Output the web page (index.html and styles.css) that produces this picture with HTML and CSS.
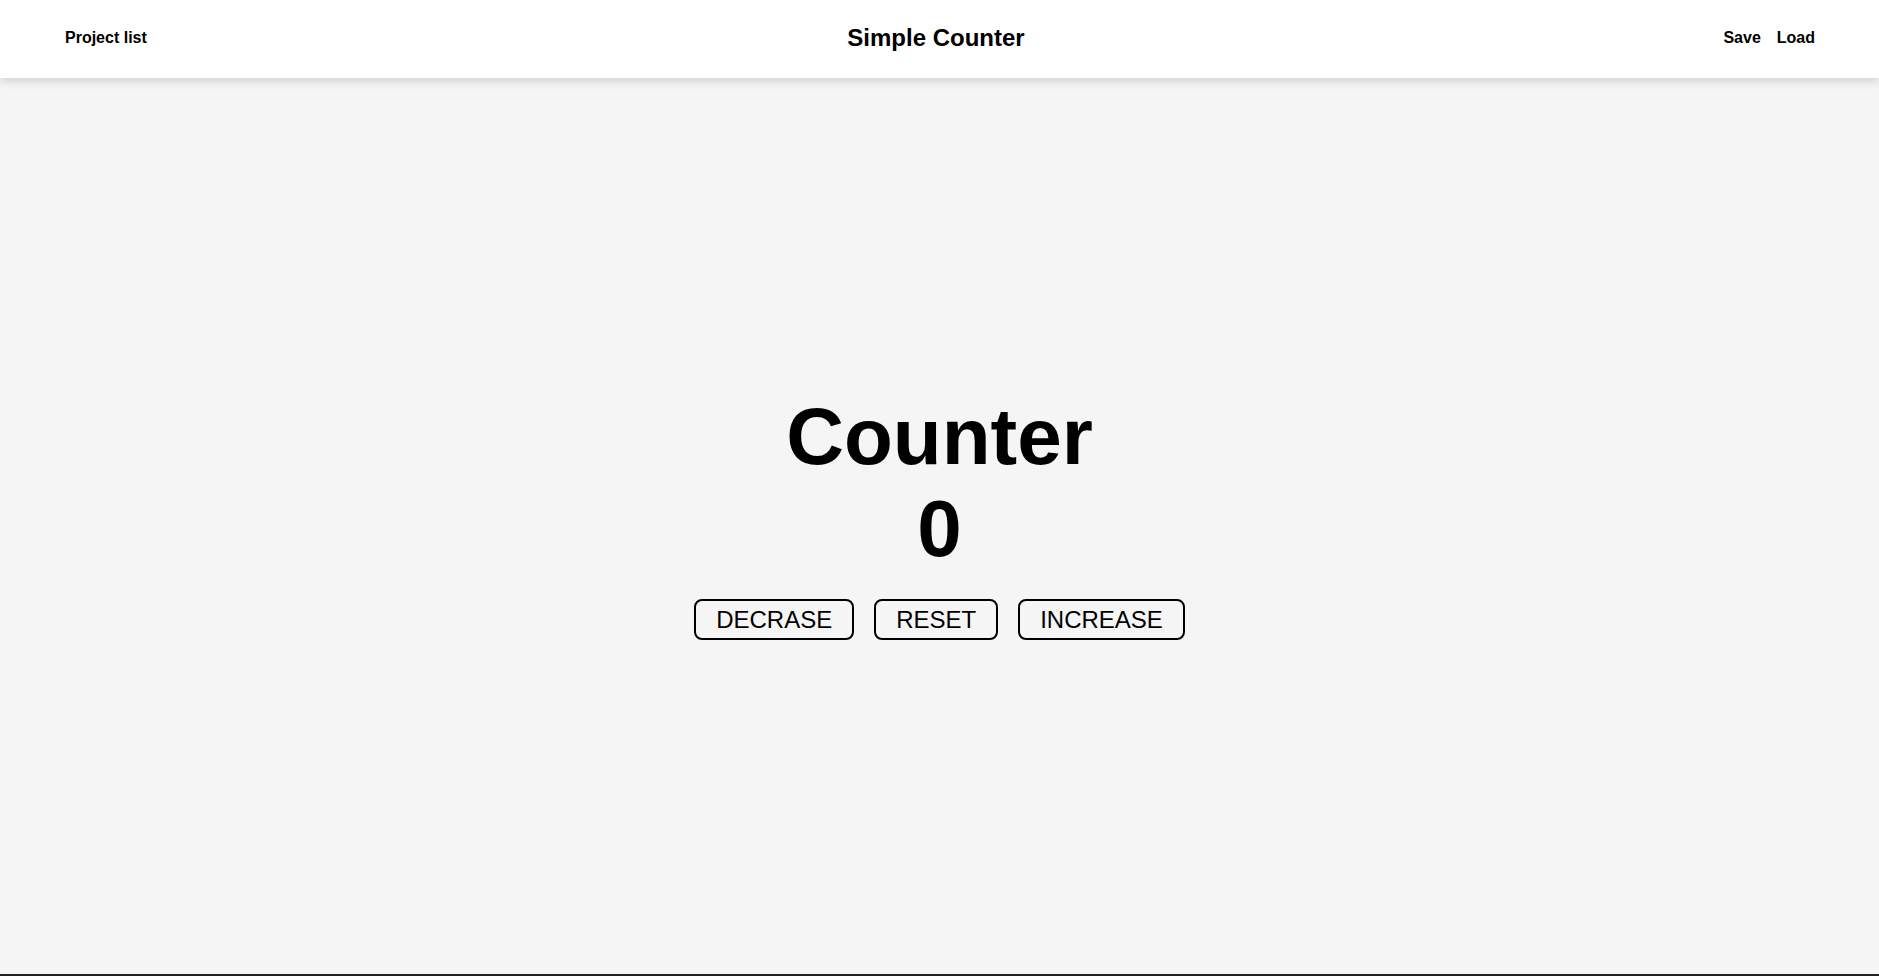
FILE: index.html
```html
<!DOCTYPE html>
<html lang="en">
<head>
<meta charset="utf-8">
<title>Simple Counter</title>
<link rel="stylesheet" href="styles.css">
</head>
<body>
<div class="app">
  <header class="topbar">
    <a class="nav-link" href="#">Project list</a>
    <h1 class="title">Simple Counter</h1>
    <nav class="actions">
      <a class="nav-link" href="#">Save</a>
      <a class="nav-link" href="#">Load</a>
    </nav>
  </header>
  <main class="content">
    <section class="counter">
      <h2 class="counter-title">Counter</h2>
      <div class="counter-value">0</div>
      <div class="buttons">
        <button class="btn">DECRASE</button>
        <button class="btn">RESET</button>
        <button class="btn">INCREASE</button>
      </div>
    </section>
  </main>
  <div class="bottom-line"></div>
</div>
</body>
</html>
```

FILE: styles.css
```css
* { box-sizing: border-box; }
html, body {
  margin: 0;
  padding: 0;
  height: 100%;
}
body {
  font-family: "Liberation Sans", Arial, sans-serif;
  background: #f5f5f5;
  color: #000;
}
.app {
  display: flex;
  flex-direction: column;
  height: 100vh;
}
.topbar {
  position: relative;
  z-index: 1;
  height: 78px;
  flex: 0 0 78px;
  background: #fff;
  box-shadow: 0 2px 10px rgba(0, 0, 0, 0.18);
  display: grid;
  grid-template-columns: 1fr auto 1fr;
  align-items: center;
  padding: 0 64px 2px 65px;
}
.nav-link {
  font-size: 16px;
  font-weight: bold;
  color: #000;
  text-decoration: none;
}
.title {
  margin: 0;
  padding-right: 8px;
  font-size: 24px;
  font-weight: bold;
  text-align: center;
}
.actions {
  display: flex;
  justify-content: flex-end;
  gap: 16px;
}
.content {
  flex: 1;
  display: flex;
  align-items: center;
  justify-content: center;
  padding-bottom: 22px;
}
.counter {
  display: flex;
  flex-direction: column;
  align-items: center;
}
.counter-title,
.counter-value {
  margin: 0;
  font-size: 80px;
  font-weight: bold;
  line-height: 92px;
}
.buttons {
  display: flex;
  gap: 20px;
  margin-top: 24px;
}
.btn {
  font-family: "Liberation Sans", Arial, sans-serif;
  font-size: 24px;
  line-height: 27px;
  padding: 5px 20px;
  border: 2px solid #000;
  border-radius: 8px;
  background: transparent;
  color: #000;
}
.bottom-line {
  flex: 0 0 2px;
  background: #222;
}
```
